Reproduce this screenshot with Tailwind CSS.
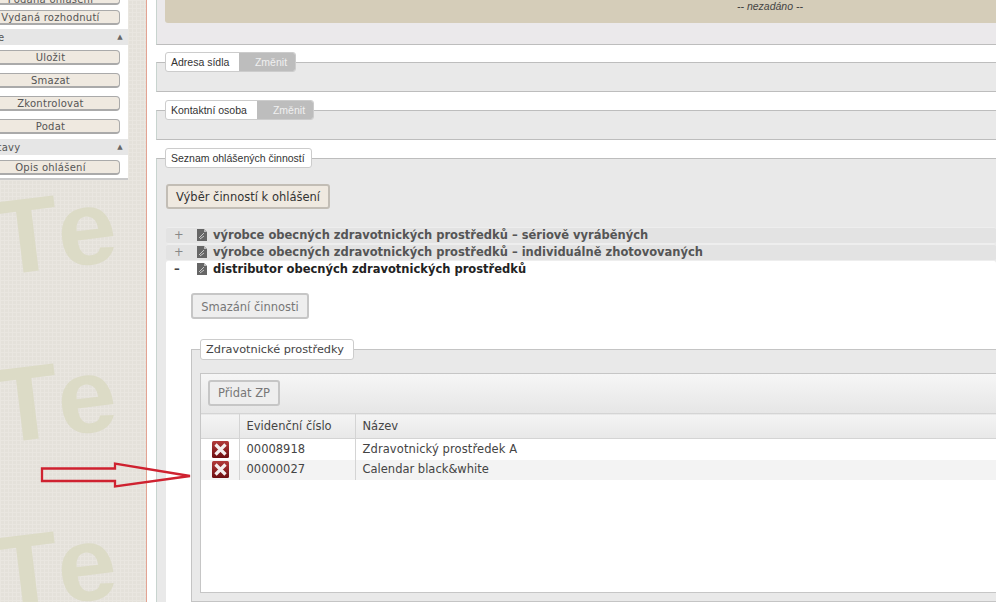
<!DOCTYPE html>
<html lang="cs">
<head>
    <meta charset="UTF-8">
    <title>Ohlášení činností</title>
    <script src="https://cdn.jsdelivr.net/npm/@tailwindcss/browser@4"></script>
</head>
<body class="relative flex h-[602px] w-[996px] overflow-hidden bg-white font-['DejaVu_Sans',sans-serif] text-[#444]">

    <!-- Left column: textured background with watermark and menu -->
    <aside class="relative h-full w-[147px] shrink-0 overflow-hidden border-r border-[#e3a392] bg-[#e4e1da] bg-[linear-gradient(#e9e6e0_1px,transparent_1px),linear-gradient(90deg,#e9e6e0_1px,transparent_1px)] bg-[length:4px_4px]">
        <span class="absolute left-[-6px] top-[178px] rotate-[-7deg] font-['Liberation_Sans',sans-serif] text-[106px] font-bold leading-none tracking-[6px] whitespace-nowrap text-[#dcdbc6]">Te</span>
        <span class="absolute left-[-6px] top-[346px] rotate-[-7deg] font-['Liberation_Sans',sans-serif] text-[106px] font-bold leading-none tracking-[6px] whitespace-nowrap text-[#dcdbc6]">Te</span>
        <span class="absolute left-[-6px] top-[514px] rotate-[-7deg] font-['Liberation_Sans',sans-serif] text-[106px] font-bold leading-none tracking-[6px] whitespace-nowrap text-[#dcdbc6]">Te</span>

        <nav class="relative -ml-[27px] -mt-[10px] flex w-[155px] flex-col border-b-2 border-[#c9c9c9] bg-white text-[10px] tracking-[0.25px] text-[#555]">
            <div class="flex flex-col gap-[5px] px-[8px] pb-[4px]">
                <button class="h-[15px] rounded-[4px] border border-[#aaa] border-b-2 bg-[#efe9e0] pt-[3px] leading-[12px]">Podaná ohlášení</button>
                <button class="h-[15px] rounded-[4px] border border-[#aaa] border-b-2 bg-[#efe9e0] pt-[1px] leading-[12px]">Vydaná rozhodnutí</button>
            </div>
            <div class="flex h-[16px] items-center justify-between bg-[#e6e6e6] pl-[6px] pr-[5px] text-[#555]"><span>Akce</span><span class="text-[7px] text-[#666]">▲</span></div>
            <div class="flex flex-col gap-[8px] px-[8px] pb-[5px] pt-[5px]">
                <button class="h-[15px] rounded-[4px] border border-[#aaa] border-b-2 bg-[#efe9e0] pt-[1px] leading-[12px]">Uložit</button>
                <button class="h-[15px] rounded-[4px] border border-[#aaa] border-b-2 bg-[#efe9e0] pt-[1px] leading-[12px]">Smazat</button>
                <button class="h-[15px] rounded-[4px] border border-[#aaa] border-b-2 bg-[#efe9e0] pt-[1px] leading-[12px]">Zkontrolovat</button>
                <button class="h-[15px] rounded-[4px] border border-[#aaa] border-b-2 bg-[#efe9e0] pt-[1px] leading-[12px]">Podat</button>
            </div>
            <div class="flex h-[16px] items-center justify-between bg-[#e6e6e6] pl-[6px] pr-[5px] text-[#555]"><span>Sestavy</span><span class="text-[7px] text-[#666]">▲</span></div>
            <div class="flex flex-col px-[8px] pb-[3px] pt-[5px]">
                <button class="h-[15px] rounded-[4px] border border-[#aaa] border-b-2 bg-[#efe9e0] pt-[1px] leading-[12px]">Opis ohlášení</button>
            </div>
        </nav>
    </aside>

    <!-- Main content -->
    <main class="ml-[9px] flex h-full min-w-0 flex-1 flex-col">
        <section class="h-[45px] shrink-0 border-b border-l border-[#bdbdbd] border-l-[#c8d4cf] bg-[#ebe9eb] pl-[8px]">
            <div class="h-[23px] rounded-bl-[3px] bg-[#d5cdb9] pl-[572px] font-['Liberation_Sans',sans-serif] text-[10.5px] italic leading-[12px] text-[#444]">-- nezadáno --</div>
        </section>

        <fieldset class="mt-[7px] shrink-0 border border-r-0 border-[#bdbdbd] border-l-[#c8d4cf] bg-[#e9e9e9]">
            <legend class="ml-[8px] flex h-[20px] overflow-hidden rounded-[3px] border border-[#ccc] bg-white font-['Liberation_Sans',sans-serif] text-[10.5px] leading-[18px] text-[#333]">
                <span class="w-[73px] whitespace-nowrap pl-[5px]">Adresa sídla</span>
                <span class="w-[56px] bg-[#bdbdbd] pl-[8px] text-center text-[#f0f0f0]">Změnit</span>
            </legend>
            <div class="h-[19px]"></div>
        </fieldset>

        <fieldset class="mt-[8px] shrink-0 border border-r-0 border-[#bdbdbd] border-l-[#c8d4cf] bg-[#e9e9e9]">
            <legend class="ml-[8px] flex h-[20px] overflow-hidden rounded-[3px] border border-[#ccc] bg-white font-['Liberation_Sans',sans-serif] text-[10.5px] leading-[18px] text-[#333]">
                <span class="w-[91px] whitespace-nowrap pl-[5px]">Kontaktní osoba</span>
                <span class="w-[56px] bg-[#bdbdbd] pl-[8px] text-center text-[#f0f0f0]">Změnit</span>
            </legend>
            <div class="h-[19px]"></div>
        </fieldset>

        <fieldset class="mt-[8px] min-h-0 flex-1 border border-b-0 border-r-0 border-[#bdbdbd] border-l-[#c8d4cf] bg-[#e9e9e9] pl-[9px]">
            <legend class="-ml-[1px] h-[20px] w-[147px] whitespace-nowrap rounded-[3px] border border-[#ccc] bg-white pl-[5px] font-['Liberation_Sans',sans-serif] text-[10.5px] leading-[18px] text-[#333]">Seznam ohlášených činností</legend>

            <button class="mt-[16px] block h-[25px] w-[164px] rounded-[3px] border-2 border-[#c2bdb5] bg-[#efe9e0] text-[11.5px] leading-[20px] text-[#333]">Výběr činností k ohlášení</button>

            <!-- Accordion -->
            <div class="mt-[18px] flex h-[17px] items-center rounded-[2px] border-y border-[#eeeeee] bg-[#e3e3e3] pt-[1px] text-[11.5px] font-bold text-[#555]">
                <span class="w-[31px] pl-[8px] font-normal text-[#888]">+</span>
                <svg class="-mt-[2px] h-[12px] w-[10px]" viewBox="0 0 10 12"><path d="M0 0h7l3 3v9H0z" fill="#666"/><path d="M7 0l3 3H7z" fill="#bbb"/><path d="M2 9l5-5M3 10l4-3" stroke="#c9c9c9" stroke-width="1" fill="none"/></svg>
                <span class="ml-[6px] whitespace-nowrap">výrobce obecných zdravotnických prostředků – sériově vyráběných</span>
            </div>
            <div class="flex h-[17px] items-center rounded-[2px] border-y border-[#eeeeee] bg-[#e3e3e3] pt-[1px] text-[11.5px] font-bold text-[#555]">
                <span class="w-[31px] pl-[8px] font-normal text-[#888]">+</span>
                <svg class="-mt-[2px] h-[12px] w-[10px]" viewBox="0 0 10 12"><path d="M0 0h7l3 3v9H0z" fill="#666"/><path d="M7 0l3 3H7z" fill="#bbb"/><path d="M2 9l5-5M3 10l4-3" stroke="#c9c9c9" stroke-width="1" fill="none"/></svg>
                <span class="ml-[6px] whitespace-nowrap">výrobce obecných zdravotnických prostředků – individuálně zhotovovaných</span>
            </div>
            <div class="flex h-[17px] items-center rounded-t-[2px] bg-white pt-[1px] text-[11.5px] font-bold text-[#222]">
                <span class="w-[31px] pl-[8px] font-bold text-[#444]">–</span>
                <svg class="-mt-[2px] h-[12px] w-[10px]" viewBox="0 0 10 12"><path d="M0 0h7l3 3v9H0z" fill="#666"/><path d="M7 0l3 3H7z" fill="#bbb"/><path d="M2 9l5-5M3 10l4-3" stroke="#c9c9c9" stroke-width="1" fill="none"/></svg>
                <span class="ml-[6px] whitespace-nowrap">distributor obecných zdravotnických prostředků</span>
            </div>

            <!-- Open accordion panel -->
            <div class="h-[324px] bg-white pl-[25px] pt-[15px]">
                <button class="block h-[26px] w-[118px] rounded-[3px] border-2 border-[#c6c6c6] bg-[#eeeeee] pt-[1px] text-[11.5px] leading-[20px] text-[#777]">Smazání činnosti</button>

                <fieldset class="mt-[20px] border border-r-0 border-[#c4c4c4] bg-[#e9e9e9] pb-[8px] pl-[8px]">
                    <legend class="h-[21px] w-[154px] whitespace-nowrap rounded-[3px] border border-[#ccc] bg-white pl-[5px] text-[11.3px] leading-[19px] text-[#444]">Zdravotnické prostředky</legend>

                    <div class="mt-[13px] h-[220px] border border-r-0 border-[#c6c6c6] bg-white">
                        <div class="h-[39px] bg-[linear-gradient(#f6f6f6,#e6e6e6)] pl-[7px] pt-[6px]">
                            <button class="block h-[26px] w-[72px] rounded-[3px] border-2 border-[#c6c6c6] bg-[#eeeeee] text-[11.5px] leading-[20px] text-[#777]">Přidat ZP</button>
                        </div>
                        <table class="w-full table-fixed border-collapse text-left text-[11.5px] text-[#444]">
                            <thead>
                                <tr class="h-[25px] border-y border-[#d4d4d4] bg-[linear-gradient(#f4f4f4,#e8e8e8)]">
                                    <th class="w-[38px] font-normal"></th>
                                    <th class="w-[116px] border-l border-[#d4d4d4] pl-[7px] pt-[1px] font-normal">Evidenční číslo</th>
                                    <th class="border-l border-[#d4d4d4] pl-[7px] pt-[1px] font-normal">Název</th>
                                </tr>
                            </thead>
                            <tbody>
                                <tr class="h-[21px] bg-white">
                                    <td class="pl-[11px] align-middle">
                                        <svg class="block h-[17px] w-[17px]" viewBox="0 0 17 17"><defs><linearGradient id="xa" x1="0" y1="0" x2="0" y2="1"><stop offset="0" stop-color="#b23a3a"/><stop offset="1" stop-color="#6d0f12"/></linearGradient></defs><rect width="17" height="17" rx="1.5" fill="url(#xa)"/><path d="M3.5 3.5l10 10M13.5 3.5l-10 10" stroke="#f4eeee" stroke-width="3.2"/></svg>
                                    </td>
                                    <td class="border-l border-[#d4d4d4] pl-[7px] pt-[1px]">00008918</td>
                                    <td class="border-l border-[#d4d4d4] pl-[7px] pt-[1px] tracking-[0.1px]">Zdravotnický prostředek A</td>
                                </tr>
                                <tr class="h-[20px] bg-[#f3f3f3]">
                                    <td class="pl-[11px] align-middle">
                                        <svg class="block h-[17px] w-[17px]" viewBox="0 0 17 17"><rect width="17" height="17" rx="1.5" fill="url(#xa)"/><path d="M3.5 3.5l10 10M13.5 3.5l-10 10" stroke="#f4eeee" stroke-width="3.2"/></svg>
                                    </td>
                                    <td class="border-l border-[#d4d4d4] pl-[7px] pt-[1px]">00000027</td>
                                    <td class="border-l border-[#d4d4d4] pl-[7px] pt-[1px]">Calendar black&amp;white</td>
                                </tr>
                            </tbody>
                        </table>
                    </div>
                </fieldset>
            </div>
        </fieldset>
    </main>

    <!-- Red annotation arrow drawn over the page -->
    <svg class="absolute left-[38px] top-[460px] h-[30px] w-[156px]" viewBox="0 0 156 30" fill="none">
        <path d="M4 8.5H77V3.5L152 16L77 26.5V21H4Z" stroke="#cf2230" stroke-width="2.3"/>
    </svg>
</body>
</html>
